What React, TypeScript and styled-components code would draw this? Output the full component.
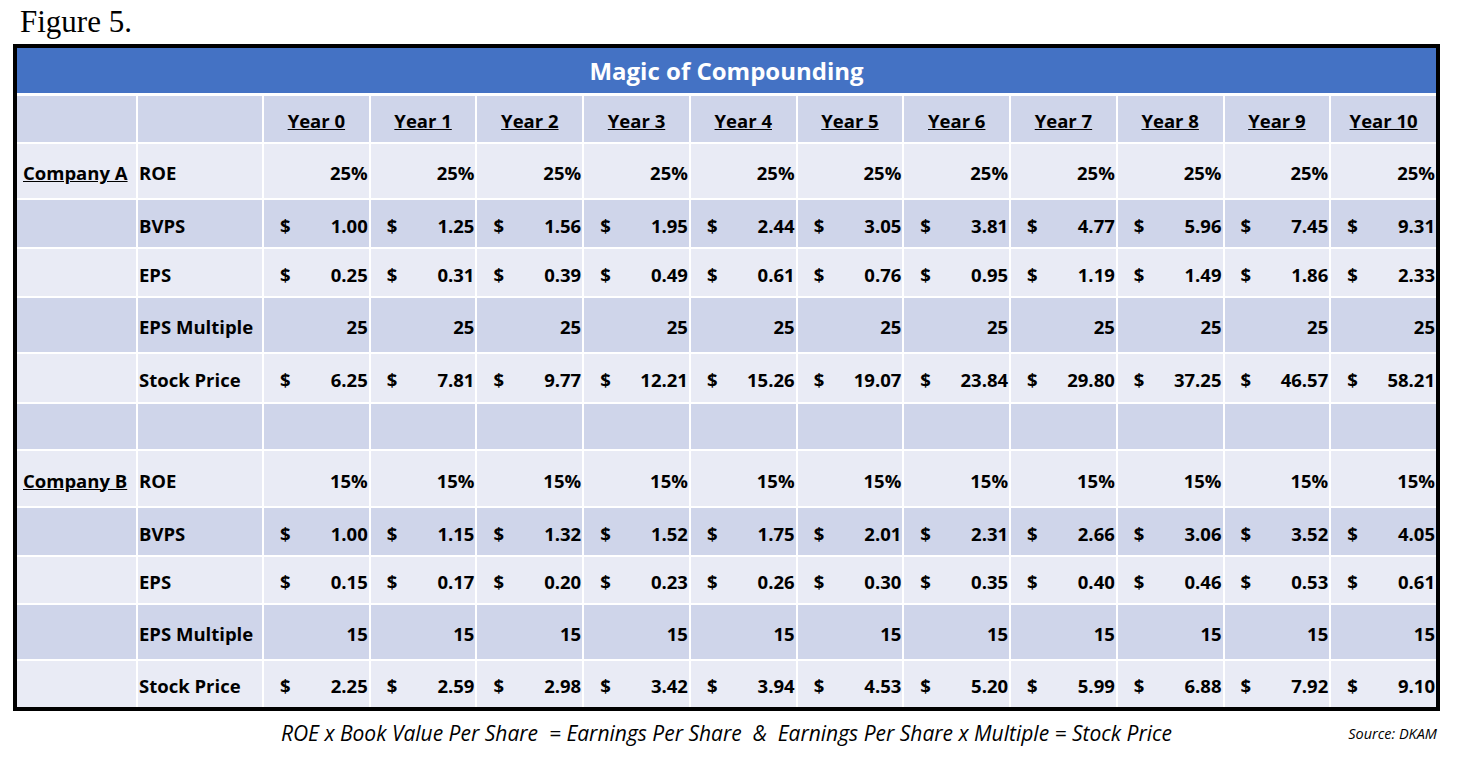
import styled, { createGlobalStyle } from "styled-components";

const GlobalStyle = createGlobalStyle`
    html, body {
        margin: 0;
        padding: 0;
        background: #ffffff;
    }
`;

type RowKind = "dark" | "light";

interface IRow {
    company?: string;
    label: string;
    kind: RowKind;
    height: number;
    money: boolean;
    values: string[];
}

const years = Array.from({ length: 11 }, (_, i) => `Year ${i}`);
const fill = (v: string) => Array.from({ length: 11 }, () => v);

const rows: (IRow | { blank: true; height: number })[] = [
    { company: "Company A", label: "ROE", kind: "light", height: 54, money: false, values: fill("25%") },
    { label: "BVPS", kind: "dark", height: 47, money: true, values: ["1.00", "1.25", "1.56", "1.95", "2.44", "3.05", "3.81", "4.77", "5.96", "7.45", "9.31"] },
    { label: "EPS", kind: "light", height: 47, money: true, values: ["0.25", "0.31", "0.39", "0.49", "0.61", "0.76", "0.95", "1.19", "1.49", "1.86", "2.33"] },
    { label: "EPS Multiple", kind: "dark", height: 54, money: false, values: fill("25") },
    { label: "Stock Price", kind: "light", height: 48, money: true, values: ["6.25", "7.81", "9.77", "12.21", "15.26", "19.07", "23.84", "29.80", "37.25", "46.57", "58.21"] },
    { blank: true, height: 45 },
    { company: "Company B", label: "ROE", kind: "light", height: 55, money: false, values: fill("15%") },
    { label: "BVPS", kind: "dark", height: 47, money: true, values: ["1.00", "1.15", "1.32", "1.52", "1.75", "2.01", "2.31", "2.66", "3.06", "3.52", "4.05"] },
    { label: "EPS", kind: "light", height: 46, money: true, values: ["0.15", "0.17", "0.20", "0.23", "0.26", "0.30", "0.35", "0.40", "0.46", "0.53", "0.61"] },
    { label: "EPS Multiple", kind: "dark", height: 54, money: false, values: fill("15") },
    { label: "Stock Price", kind: "light", height: 46, money: true, values: ["2.25", "2.59", "2.98", "3.42", "3.94", "4.53", "5.20", "5.99", "6.88", "7.92", "9.10"] },
];

const App = () => {
    return (
        <Page>
            <GlobalStyle />
            <Caption>Figure 5.</Caption>
            <Frame>
                <TitleBar>Magic of Compounding</TitleBar>
                <Body>
                    <Row kind="dark" height={46}>
                        <Cell />
                        <Cell />
                        {years.map((y) => (
                            <HeadCell key={y}>
                                <u>{y}</u>
                            </HeadCell>
                        ))}
                    </Row>
                    {rows.map((r, i) =>
                        "blank" in r ? (
                            <Row key={i} kind="dark" height={r.height}>
                                {Array.from({ length: 13 }, (_, j) => (
                                    <Cell key={j} />
                                ))}
                            </Row>
                        ) : (
                            <Row key={i} kind={r.kind} height={r.height}>
                                <CompanyCell>{r.company && <u>{r.company}</u>}</CompanyCell>
                                <LabelCell>{r.label}</LabelCell>
                                {r.values.map((v, j) => (
                                    <ValueCell key={j}>
                                        {r.money ? <Dollar>$</Dollar> : <span />}
                                        <span>{v}</span>
                                    </ValueCell>
                                ))}
                            </Row>
                        )
                    )}
                </Body>
            </Frame>
            <Footer>
                <span />
                <Formula>ROE x Book Value Per Share&nbsp; = Earnings Per Share&nbsp; &amp;&nbsp; Earnings Per Share x Multiple = Stock Price</Formula>
                <Source>Source: DKAM</Source>
            </Footer>
        </Page>
    );
};

export default App;

const Page = styled.div`
    width: 1427px;
    padding: 6px 0 0 13px;
    font-family: "Open Sans", "Noto Sans", sans-serif;
    color: #000;
`;

const Caption = styled.div`
    font-family: "Liberation Serif", "Times New Roman", serif;
    font-size: 31px;
    line-height: 32px;
    padding-left: 7px;
    height: 38px;
`;

const Frame = styled.div`
    border: 4px solid #000;
    background: #fff;
`;

const TitleBar = styled.div`
    height: 45px;
    background: #4472c4;
    color: #fff;
    font-weight: 700;
    font-size: 24px;
    display: flex;
    align-items: center;
    justify-content: center;
    margin-bottom: 3px;
`;

const Body = styled.div`
    display: flex;
    flex-direction: column;
    gap: 2px;
`;

const Row = styled.div<{ kind: RowKind; height: number }>`
    display: grid;
    grid-template-columns: 119px 124px repeat(11, 1fr);
    column-gap: 2px;
    height: ${(p) => p.height}px;
    & > * {
        background: ${(p) => (p.kind === "dark" ? "#cfd5ea" : "#e9ebf5")};
    }
`;

const Cell = styled.div``;

const HeadCell = styled.div`
    display: flex;
    align-items: center;
    justify-content: center;
    padding-top: 3px;
    font-weight: 700;
    font-size: 18.5px;
    white-space: nowrap;
`;

const CompanyCell = styled.div`
    display: flex;
    align-items: center;
    padding: 3px 0 0 6px;
    font-weight: 700;
    font-size: 18.5px;
    white-space: nowrap;
`;

const LabelCell = styled.div`
    display: flex;
    align-items: center;
    padding: 3px 0 0 1px;
    font-weight: 700;
    font-size: 18.5px;
    white-space: nowrap;
`;

const ValueCell = styled.div`
    display: flex;
    align-items: center;
    justify-content: space-between;
    padding: 3px 1px 0 16px;
    font-weight: 700;
    font-size: 18.5px;
    white-space: nowrap;
    overflow: hidden;
`;

const Dollar = styled.span``;

const Footer = styled.div`
    display: grid;
    grid-template-columns: 1fr auto 1fr;
    align-items: center;
    padding-top: 8px;
`;

const Formula = styled.span`
    font-style: italic;
    font-size: 21px;
    white-space: nowrap;
`;

const Source = styled.span`
    justify-self: end;
    padding-right: 3px;
    font-style: italic;
    font-size: 14.5px;
`;
